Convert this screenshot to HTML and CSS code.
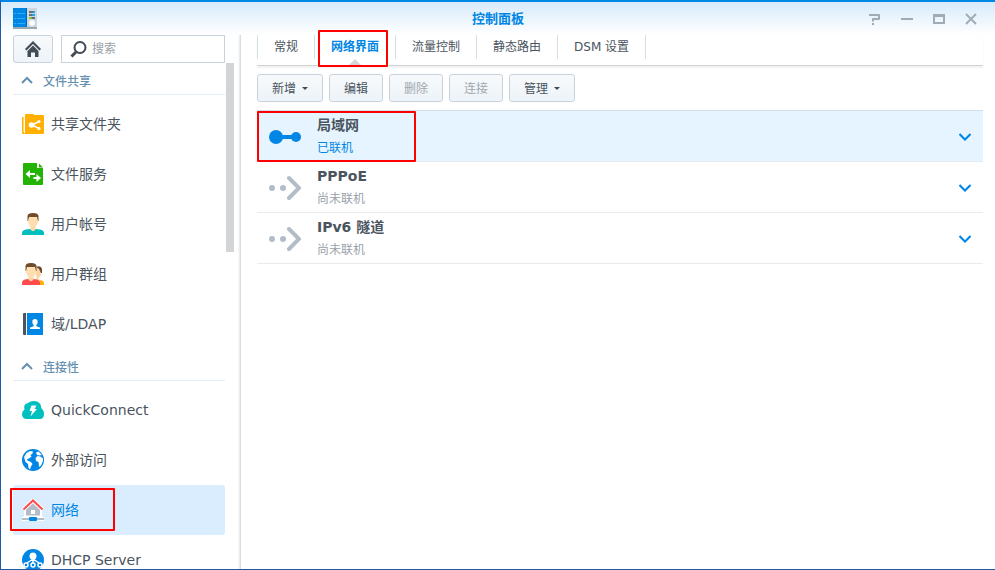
FILE: index.html
```html
<!DOCTYPE html>
<html lang="zh-CN">

<head>
  <meta charset="UTF-8">
  <meta name="viewport" content="width=device-width, initial-scale=1.0">
  <title>控制面板</title>
  <link rel="stylesheet" href="styles.css">
</head>

<body>
  <div class="window">
    <header class="titlebar">
      <svg class="app-icon" width="24" height="21" viewBox="0 0 24 21">
        <rect y="19" width="24" height="2" fill="#9da7b0"/>
        <rect width="14" height="19" fill="#0086e5"/>
        <rect x="13" width="1" height="19" fill="#0068b8"/>
        <rect x="14" width="10" height="19" fill="#cfd8df"/>
        <path d="M1 5.5h2M4 5.5h8M1 10.5h2M4 10.5h8M1 15.5h2M4 15.5h8" stroke="#30aaf5" fill="none"/>
        <path d="M16 4h5M16 7h3M18 10h4" stroke="#414b55" stroke-width="1.4"/>
        <path d="M20 4h2M19 7h3" stroke="#1ba5ea" stroke-width="2"/>
        <path d="M16 10h3" stroke="#83c600" stroke-width="1.6"/>
        <circle cx="19" cy="15" r="2.8" fill="#fff"/>
      </svg>
      <h1 class="title">控制面板</h1>
      <div class="window-actions">
        <button class="win-btn" aria-label="帮助"><svg width="12" height="12" viewBox="0 0 12 12"><path d="M0 2h10v4H4v2.500M3 11h2" stroke-width="2" stroke-linejoin="round"/></svg></button>
        <button class="win-btn" aria-label="最小化"><svg width="12" height="12" viewBox="0 0 12 12"><path d="M0 6h12" stroke-width="2"/></svg></button>
        <button class="win-btn" aria-label="最大化"><svg width="12" height="12" viewBox="0 0 12 12"><path d="M1 2v8h10V2" stroke-width="2"/><path d="M0 2.500h12" stroke-width="3"/></svg></button>
        <button class="win-btn" aria-label="关闭"><svg width="12" height="12" viewBox="0 0 12 12"><path d="M1 1l10 10M11 1L1 11" stroke-width="2"/></svg></button>
      </div>
    </header>

    <div class="content">
      <aside class="sidebar">
        <div class="search-row">
          <button class="btn home-btn" aria-label="主页">
            <svg width="16" height="16" viewBox="0 0 16 16" fill="#414b55">
              <path d="M8 0L0 8l1.5 1.5L8 3l6.5 6.5L16 8z"/>
              <path d="M8 4.5L2.5 10v6H6v-4.5h4V16h3.500v-6z"/>
            </svg>
          </button>
          <label class="search">
            <svg width="17" height="17" viewBox="0 0 17 17" fill="none" stroke="#414b55">
              <circle cx="10" cy="6.500" r="5.500" stroke-width="2"/>
              <path d="M6 11l-4.500 4.500" stroke-width="3"/>
            </svg>
            <input type="text" placeholder="搜索" aria-label="搜索">
          </label>
        </div>

        <div class="nav-area">
          <nav class="nav-list">
            <button class="group"><svg width="12" height="8" viewBox="0 0 12 8"><path d="M1 7l5-5 5 5"/></svg>文件共享</button>
            <a class="nav-item" href="#share">
              <svg width="22" height="22" viewBox="0 0 22 22">
                <path d="M3 2q0-1 1-1h7q1 0 1 1h9q1 0 1 1v17q0 1-1 1H3z" fill="#ffb000"/>
                <path d="M0 4h1.500v15L3 20.500V21H1q-1 0-1-1z" fill="#ffb000"/>
                <path d="M17 8.500l-7 3.500 7 3.500" fill="none" stroke="#fff" stroke-width="1.500"/>
                <circle cx="9.500" cy="12" r="2.800" fill="#fff"/>
                <circle cx="17" cy="8.500" r="1.500" fill="#fff"/>
                <circle cx="17" cy="15.500" r="1.500" fill="#fff"/>
              </svg>
              共享文件夹
            </a>
            <a class="nav-item" href="#file">
              <svg width="22" height="22" viewBox="0 0 22 22">
                <path d="M2 0h13v5h6v16q0 1-1 1H2q-1 0-1-1V1q0-1 1-1z" fill="#22b400"/>
                <path d="M17 0.500l4 4h-4z" fill="#22b400"/>
                <path d="M3.500 11l4.500-4v3h5v2H8v3zM19 15l-4.500-4v3h-3v2h3v3z" fill="#fff"/>
              </svg>
              文件服务
            </a>
            <a class="nav-item" href="#user">
              <svg width="22" height="22" viewBox="0 0 22 22">
                <path d="M0 22v-2q0-3 4-3.500l4-.5h6l4 .5q4 .5 4 3.500v2z" fill="#00bfbf"/>
                <path d="M8.500 12h5v4.500Q11 20 8.500 16.500z" fill="#fbd5a3"/>
                <path d="M6 4h10v5q-1 5-5 6-4-1-5-6z" fill="#ffdfb0"/>
                <path d="M5.500 8V4Q5 0 11 0t5.500 4v4H16l-1-4H7L6 8z" fill="#6f4a2c"/>
              </svg>
              用户帐号
            </a>
            <a class="nav-item" href="#group">
              <svg width="22" height="22" viewBox="0 0 22 22">
                <path d="M15 22v-5l4 0q3 1 3 3v2z" fill="#ffb000"/>
                <path d="M13 5h6v5q0 4-3 5l3 3h-4z" fill="#fbd5a3"/>
                <path d="M14 4q5-2 6 2v4h-1l-2-4z" fill="#6f4a2c"/>
                <path d="M0 22v-2q0-3 3-3.500l3-.5h6l3 .5q3 .5 3 3.500v2z" fill="#ff4b4b"/>
                <path d="M6.500 12h5v4.500Q9 20 6.500 16.500z" fill="#fbd5a3"/>
                <path d="M4 4h10v5q-1 5-5 6-4-1-5-6z" fill="#ffdfb0"/>
                <path d="M3.500 8V4Q3 0 9 0t5.500 4v4H14l-1-4H5L4 8z" fill="#6f4a2c"/>
              </svg>
              用户群组
            </a>
            <a class="nav-item" href="#ldap">
              <svg width="22" height="22" viewBox="0 0 22 22">
                <path d="M2 0h2v22H2q-1 0-1-1V1q0-1 1-1z" fill="#4a5560"/>
                <path d="M5 0h16v22H5z" fill="#0086e5"/>
                <path d="M13 6q2.700 0 2.700 2.500T14.300 12v1.200L18 14.500V16H8v-1.500l3.700-1.300V12q-1.400-1-1.400-3.500T13 6z" fill="#fff"/>
              </svg>
              域/LDAP
            </a>

            <button class="group"><svg width="12" height="8" viewBox="0 0 12 8"><path d="M1 7l5-5 5 5"/></svg>连接性</button>
            <a class="nav-item" href="#quickconnect">
              <svg width="22" height="22" viewBox="0 0 22 22">
                <path d="M5 20q-5 0-5-5 0-3 2.500-4.500Q1 5 6 4q2-2 6-2 7 0 7.500 7.500Q22 11 22 15q0 5-4 5z" fill="#00bfbf"/>
                <path d="M9.500 6.500h5l-2 3.500H15l-6.500 7.500 1.500-5.500H7.500z" fill="#fff"/>
              </svg>
              QuickConnect
            </a>
            <a class="nav-item" href="#external">
              <svg width="22" height="22" viewBox="0 0 22 22">
                <circle cx="11" cy="11" r="11" fill="#0086e5"/>
                <path d="M2 8l2.500-4L8 2l3 .5-.5 2L8.500 6l1 1.500L7 9.500 5 10l.5 1.500L9 13l1.500 2L9 17.500 8 20.500 6.500 19 6 15l-2.500-2z" fill="#fff"/>
                <path d="M14 3.500l2.500-1L20 6l-2.500.5L15 6z" fill="#fff"/>
                <path d="M13.500 9l2-2 3 .5 2.500 2v2.500l-2 4.500-2 1.500-.5-5-2.500-1z" fill="#fff"/>
              </svg>
              外部访问
            </a>
            <a class="nav-item active marked" href="#network">
              <svg width="22" height="22" viewBox="1 1 22 22">
                <path d="M4 10l8-7 8 7v8H4z" fill="#b2bdc8" stroke="#fff" stroke-width="2"/>
                <path d="M5 10l7-6.500 7 6.500v7.500H5z" fill="#b2bdc8"/>
                <path d="M2.500 11.500L12 2.500l9.500 9" fill="none" stroke="#fff" stroke-width="4"/>
                <path d="M2.500 11.500L12 2.500l9.500 9" fill="none" stroke="#ff4b4b" stroke-width="2"/>
                <path d="M10 12h4v4h-4z" fill="#fff"/>
                <path d="M0 19h24v4H0z" fill="#fff"/>
                <path d="M1 20h22v2H1z" fill="#b2bdc8"/>
                <rect x="8" y="19" width="8" height="4" rx="1" fill="#0086e5"/>
              </svg>
              网络
            </a>
            <a class="nav-item" href="#dhcp">
              <svg width="22" height="22" viewBox="0 0 22 22">
                <circle cx="11" cy="11" r="11" fill="#0086e5"/>
                <circle cx="11" cy="7" r="3.500" fill="#fff"/>
                <path d="M11 10v5M11 10l-6 4M11 10l6 4" stroke="#fff" stroke-width="1.500"/>
                <g fill="#0086e5" stroke="#fff" stroke-width="1.500"><circle cx="4" cy="16" r="2"/><circle cx="11" cy="16" r="2"/><circle cx="18" cy="16" r="2"/></g>
              </svg>
              DHCP Server
            </a>
          </nav>
          <div class="scroll-thumb"></div>
        </div>
      </aside>

      <main class="main">
        <nav class="tabs">
          <a class="tab" href="#general">常规</a>
          <a class="tab active marked" href="#interface">网络界面</a>
          <a class="tab" href="#traffic">流量控制</a>
          <a class="tab" href="#route">静态路由</a>
          <a class="tab" href="#dsm">DSM 设置</a>
        </nav>

        <div class="toolbar">
          <button class="btn">新增<span class="caret"></span></button>
          <button class="btn">编辑</button>
          <button class="btn" disabled>删除</button>
          <button class="btn" disabled>连接</button>
          <button class="btn">管理<span class="caret"></span></button>
        </div>

        <ul class="interfaces">
          <li class="interface active marked">
            <svg width="32" height="26" viewBox="0 0 32 26" fill="#0086e5"><circle cx="7" cy="13" r="7"/><circle cx="27" cy="13" r="5"/><path d="M7 11h20v4H7z"/></svg>
            <div class="info">
              <h2 class="name">局域网</h2>
              <p class="status">已联机</p>
            </div>
            <button class="expand" aria-label="展开"><svg width="12" height="8" viewBox="0 0 12 8"><path d="M0.500 1L6 6.500 11.500 1"/></svg></button>
          </li>
          <li class="interface">
            <svg width="32" height="26" viewBox="0 0 32 26" fill="#b2bdc8"><circle cx="3" cy="13" r="3"/><circle cx="14" cy="13" r="3"/><path d="M20 3l10 10-10 10" fill="none" stroke="#b2bdc8" stroke-width="4" stroke-linecap="round"/></svg>
            <div class="info">
              <h2 class="name">PPPoE</h2>
              <p class="status">尚未联机</p>
            </div>
            <button class="expand" aria-label="展开"><svg width="12" height="8" viewBox="0 0 12 8"><path d="M0.500 1L6 6.500 11.500 1"/></svg></button>
          </li>
          <li class="interface">
            <svg width="32" height="26" viewBox="0 0 32 26" fill="#b2bdc8"><circle cx="3" cy="13" r="3"/><circle cx="14" cy="13" r="3"/><path d="M20 3l10 10-10 10" fill="none" stroke="#b2bdc8" stroke-width="4" stroke-linecap="round"/></svg>
            <div class="info">
              <h2 class="name">IPv6 隧道</h2>
              <p class="status">尚未联机</p>
            </div>
            <button class="expand" aria-label="展开"><svg width="12" height="8" viewBox="0 0 12 8"><path d="M0.500 1L6 6.500 11.500 1"/></svg></button>
          </li>
        </ul>
      </main>
    </div>
  </div>
</body>

</html>
```
FILE: styles.css
```css
*,
*::before,
*::after {
  margin: 0;
  padding: 0;
  box-sizing: border-box;
}

body,
button,
input {
  font-family: Verdana, 'DejaVu Sans', 'Noto Sans CJK SC', sans-serif;
  font-size: 12px;
  color: #4a545e;
}

button {
  cursor: pointer;
}

a {
  color: inherit;
  text-decoration: none;
}

.window {
  display: flex;
  flex-direction: column;
  height: 100vh;
  border-top: 2px solid #0086e5;
  border-left: 1px solid #1f5aa8;
  border-bottom: 1px solid #1f5aa8;
  background: white;
  overflow: hidden;
}

/* title bar */
.titlebar {
  display: grid;
  grid-template-columns: 1fr auto 1fr;
  align-items: center;
  flex-shrink: 0;
  height: 33px;
  padding: 0 12px;
  background: linear-gradient(to bottom, #d7ebfa, #fff);
}

.title {
  font-size: 13px;
  line-height: 20px;
  color: #0086e5;
}

.window-actions {
  display: flex;
  justify-content: flex-end;
  gap: 20px;
  padding-right: 6px;
}

.win-btn {
  display: flex;
  background: none;
  border: none;
}

.win-btn svg {
  fill: none;
  stroke: #a0abb6;
}

.content {
  display: flex;
  flex: 1;
  min-height: 0;
}

/* sidebar */
.sidebar {
  display: flex;
  flex-direction: column;
  width: 240px;
  flex-shrink: 0;
  border-right: 1px solid #dadcde;
  box-shadow: inset -3px 0 2px -2px #e4e6e8;
}

.search-row {
  display: flex;
  gap: 8px;
  padding: 0 15px 0 12px;
}

.btn {
  display: flex;
  align-items: center;
  justify-content: center;
  gap: 6px;
  height: 28px;
  padding: 1px 14px 0;
  line-height: 18px;
  background: linear-gradient(to bottom, #f7fafc, #edf3f8);
  border: 1px solid #c8d2dc;
  border-radius: 3px;
}

.btn:disabled {
  color: #a0a8b0;
  cursor: default;
}

.home-btn {
  padding: 0 11px;
}

.search {
  display: flex;
  align-items: center;
  flex: 1;
  gap: 5px;
  min-width: 0;
  padding: 0 8px;
  border: 1px solid #c8d2dc;
}

.search svg {
  flex-shrink: 0;
}

.search input {
  flex: 1;
  min-width: 0;
  border: none;
  outline: none;
  background: none;
}

.search input::placeholder {
  color: #99a1a9;
}

.nav-area {
  display: flex;
  flex: 1;
  gap: 1px;
  min-height: 0;
}

.nav-list {
  flex: 1;
  padding-left: 12px;
  overflow: hidden;
}

.group {
  display: flex;
  align-items: center;
  gap: 10px;
  width: 100%;
  height: 32px;
  margin-bottom: 4px;
  padding: 3px 8px 0;
  font-weight: 500;
  color: #6690b0;
  background: none;
  border: none;
  border-bottom: 1px solid #e6eef5;
}

.group svg,
.expand svg {
  fill: none;
  stroke: currentColor;
  stroke-width: 2;
}

.nav-item {
  position: relative;
  display: flex;
  align-items: center;
  gap: 7px;
  height: 50px;
  padding-left: 9px;
  font-size: 14px;
  line-height: 20px;
  border-radius: 3px;
}

.nav-item.active {
  color: #0086e5;
  background: #d9edff;
}

.scroll-thumb {
  width: 8px;
  height: 189px;
  margin-right: 6px;
  background: #d2d4d6;
}

/* red highlight boxes */
.marked::after {
  content: '';
  position: absolute;
  border: 2px solid #ff0000;
  border-radius: 1px;
}

.nav-item.marked::after {
  top: 3px;
  left: -3px;
  width: 105px;
  height: 43px;
}

.tab.marked::after {
  inset: -5px 7px -8px 3px;
}

.interface.marked::after {
  top: 0;
  left: 0;
  width: 159px;
  height: 51px;
}

/* main panel */
.main {
  flex: 1;
  min-width: 0;
  padding: 0 12px 0 16px;
}

.tabs {
  display: flex;
  height: 31px;
  border-bottom: 1px solid #d0d2d4;
  box-shadow: 0 2px 2px #f0f1f2;
}

.tab {
  position: relative;
  height: 24px;
  padding: 0 16px;
  line-height: 24px;
  border-left: 1px solid #d4dfe9;
}

.tab:last-child {
  border-right: 1px solid #d4dfe9;
}

.tab.active {
  font-weight: bold;
  color: #0086e5;
}

.tab.active::before {
  content: '';
  position: absolute;
  left: 50%;
  bottom: -6px;
  margin-left: -6px;
  border: 6px solid transparent;
  border-top: none;
  border-bottom-color: #d4d6d8;
}

.toolbar {
  display: flex;
  gap: 6px;
  padding: 8px 0;
}

.caret {
  border: 3px solid transparent;
  border-top-color: #414b55;
  border-bottom: none;
}

.interfaces {
  list-style: none;
  border-top: 1px solid #d2dee8;
}

.interface {
  position: relative;
  display: flex;
  align-items: center;
  gap: 16px;
  padding: 3px 12px 1px;
  border-bottom: 1px solid #e6ebf0;
}

.interface.active {
  background: #e6f4ff;
}

.info {
  flex: 1;
}

.name {
  font-size: 14px;
  line-height: 22px;
}

.status {
  line-height: 24px;
  color: #99a1a9;
}

.interface.active .status {
  color: #0086e5;
}

.expand {
  display: flex;
  color: #0086e5;
  background: none;
  border: none;
}
```
